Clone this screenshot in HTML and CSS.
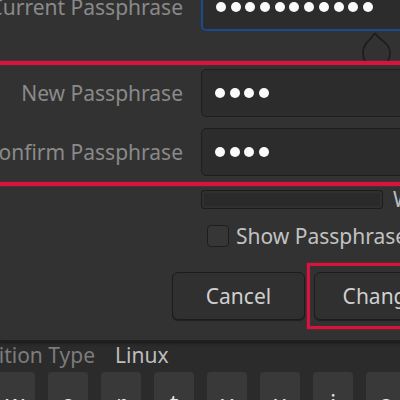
FILE: index.html
```html
<!DOCTYPE html>
<html lang="en">
<head>
    <meta charset="UTF-8">
    <title>Change Passphrase</title>
    <link rel="stylesheet" href="styles.css">
</head>
<body>
    <!-- change passphrase dialog -->
    <div class="dialog">
        <div class="row first">
            <div class="label">Current Passphrase</div>
            <div class="entry focus">
                <span class="dot"></span><span class="dot"></span><span class="dot"></span><span class="dot"></span>
                <span class="dot"></span><span class="dot"></span><span class="dot"></span><span class="dot"></span>
                <span class="dot"></span><span class="dot"></span><span class="dot"></span>
            </div>
        </div>

        <svg class="tip" width="32" height="31" viewBox="0 0 32 31">
            <path d="M14 2 C10 9 2 12 2 21 C2 26 3 29 5 31 M14 2 C18 9 29 12 29 21 C29 26 28 29 26 31" fill="none" stroke="#1c1c1c" stroke-width="1.6"/>
        </svg>

        <div class="highlight">
            <div class="row">
                <div class="label">New Passphrase</div>
                <div class="entry">
                    <span class="dot"></span><span class="dot"></span><span class="dot"></span><span class="dot"></span>
                </div>
            </div>
            <div class="row">
                <div class="label">Confirm Passphrase</div>
                <div class="entry">
                    <span class="dot"></span><span class="dot"></span><span class="dot"></span><span class="dot"></span>
                </div>
            </div>
        </div>

        <div class="strength">
            <div class="bar"></div>
            <span>Weak</span>
        </div>

        <div class="check">
            <span class="box"></span>
            <span>Show Passphrase</span>
        </div>

        <div class="buttons">
            <button>Cancel</button>
            <div class="ring">
                <button>Change</button>
            </div>
        </div>
    </div>

    <!-- window behind the dialog -->
    <div class="details">
        <div class="prop">
            <div class="name">Partition Type</div>
            <div class="value">Linux</div>
        </div>
        <div class="keys">
            <div class="key">w</div>
            <div class="key">e</div>
            <div class="key">r</div>
            <div class="key">t</div>
            <div class="key">y</div>
            <div class="key">u</div>
            <div class="key">i</div>
            <div class="key">o</div>
        </div>
    </div>
</body>
</html>
```

FILE: styles.css
```css
body {
    margin: 0;
    width: 400px;
    height: 400px;
    overflow: hidden;
    background: #2b2b2b;
    font-family: "Noto Sans", "DejaVu Sans", sans-serif;
    font-size: 21px;
}
.dialog {
    position: relative;
    width: 480px;
    background: #323232;
    padding-bottom: 11px;
    border-bottom: 2px solid #1f1f1f;
    box-shadow: 0 1px 3px rgba(0,0,0,0.5);
}
.row {
    display: flex;
    gap: 18px;
    align-items: center;
}
.row.first {
    margin-top: -17px;
    margin-bottom: 30px;
}
.label {
    width: 183px;
    flex-shrink: 0;
    display: flex;
    justify-content: flex-end;
    white-space: nowrap;
    color: #8a8a8a;
}
.entry {
    box-sizing: border-box;
    width: 240px;
    height: 48px;
    display: flex;
    align-items: center;
    gap: 4.7px;
    padding-left: 13px;
    background: #2c2c2c;
    border: 1px solid #1e1e1e;
    border-radius: 5px;
}
.entry.focus {
    border: 2px solid #1b4a8e;
}
.dot {
    width: 10px;
    height: 10px;
    border-radius: 50%;
    background: #fafafa;
}
.tip {
    position: absolute;
    left: 361px;
    top: 48px;
}
.highlight {
    position: relative;
    margin-left: -20px;
    padding: 4px 0 6px 20px;
    display: flex;
    flex-direction: column;
    gap: 11px;
    border-top: 4px solid #d6153f;
    border-bottom: 4px solid #d6153f;
    box-shadow: 0 0 2px rgba(214,21,63,0.6), inset 0 0 2px rgba(214,21,63,0.4);
}
.strength {
    display: flex;
    align-items: center;
    gap: 10px;
    padding-left: 201px;
    margin-top: 4px;
    color: #bdbdbd;
    line-height: 19px;
}
.bar {
    box-sizing: border-box;
    width: 182px;
    height: 19px;
    background: #2a2a2a;
    border: 1px solid #1c1c1c;
    border-radius: 3px;
    box-shadow: inset 0 0 0 2px #303030;
}
.check {
    display: flex;
    align-items: center;
    gap: 7px;
    padding-left: 207px;
    margin-top: 15px;
    color: #c2c2c2;
    height: 23px;
}
.box {
    box-sizing: border-box;
    width: 22px;
    height: 22px;
    background: #363636;
    border: 1px solid #1e1e1e;
    border-radius: 4px;
}
.buttons {
    display: flex;
    align-items: center;
    gap: 2px;
    padding-left: 172px;
    margin-top: 16px;
}
button {
    box-sizing: border-box;
    width: 133px;
    height: 48px;
    background: #303030;
    color: #cfcfcf;
    border: 1px solid #1c1c1c;
    border-radius: 6px;
    box-shadow: 0 1px 1px rgba(0,0,0,0.4);
    font-family: inherit;
    font-size: 21px;
}
.ring {
    padding: 6px 20px 6px 4px;
    border: 3px solid #d6153f;
    box-shadow: 0 0 2px rgba(214,21,63,0.6);
}
.details {
    padding-top: 1px;
}
.prop {
    display: flex;
    align-items: center;
    gap: 20px;
    height: 24px;
}
.name {
    width: 95px;
    flex-shrink: 0;
    display: flex;
    justify-content: flex-end;
    white-space: nowrap;
    color: #7c7c7c;
}
.value {
    color: #bdbdbd;
}
.keys {
    display: flex;
    gap: 13px;
    margin-left: -5px;
    margin-top: 5px;
}
.key {
    box-sizing: border-box;
    width: 40px;
    height: 60px;
    flex-shrink: 0;
    padding-top: 19px;
    background: #393939;
    border-radius: 4px;
    color: #e6e6e6;
    font-size: 24px;
    line-height: 24px;
    text-align: center;
}
```
